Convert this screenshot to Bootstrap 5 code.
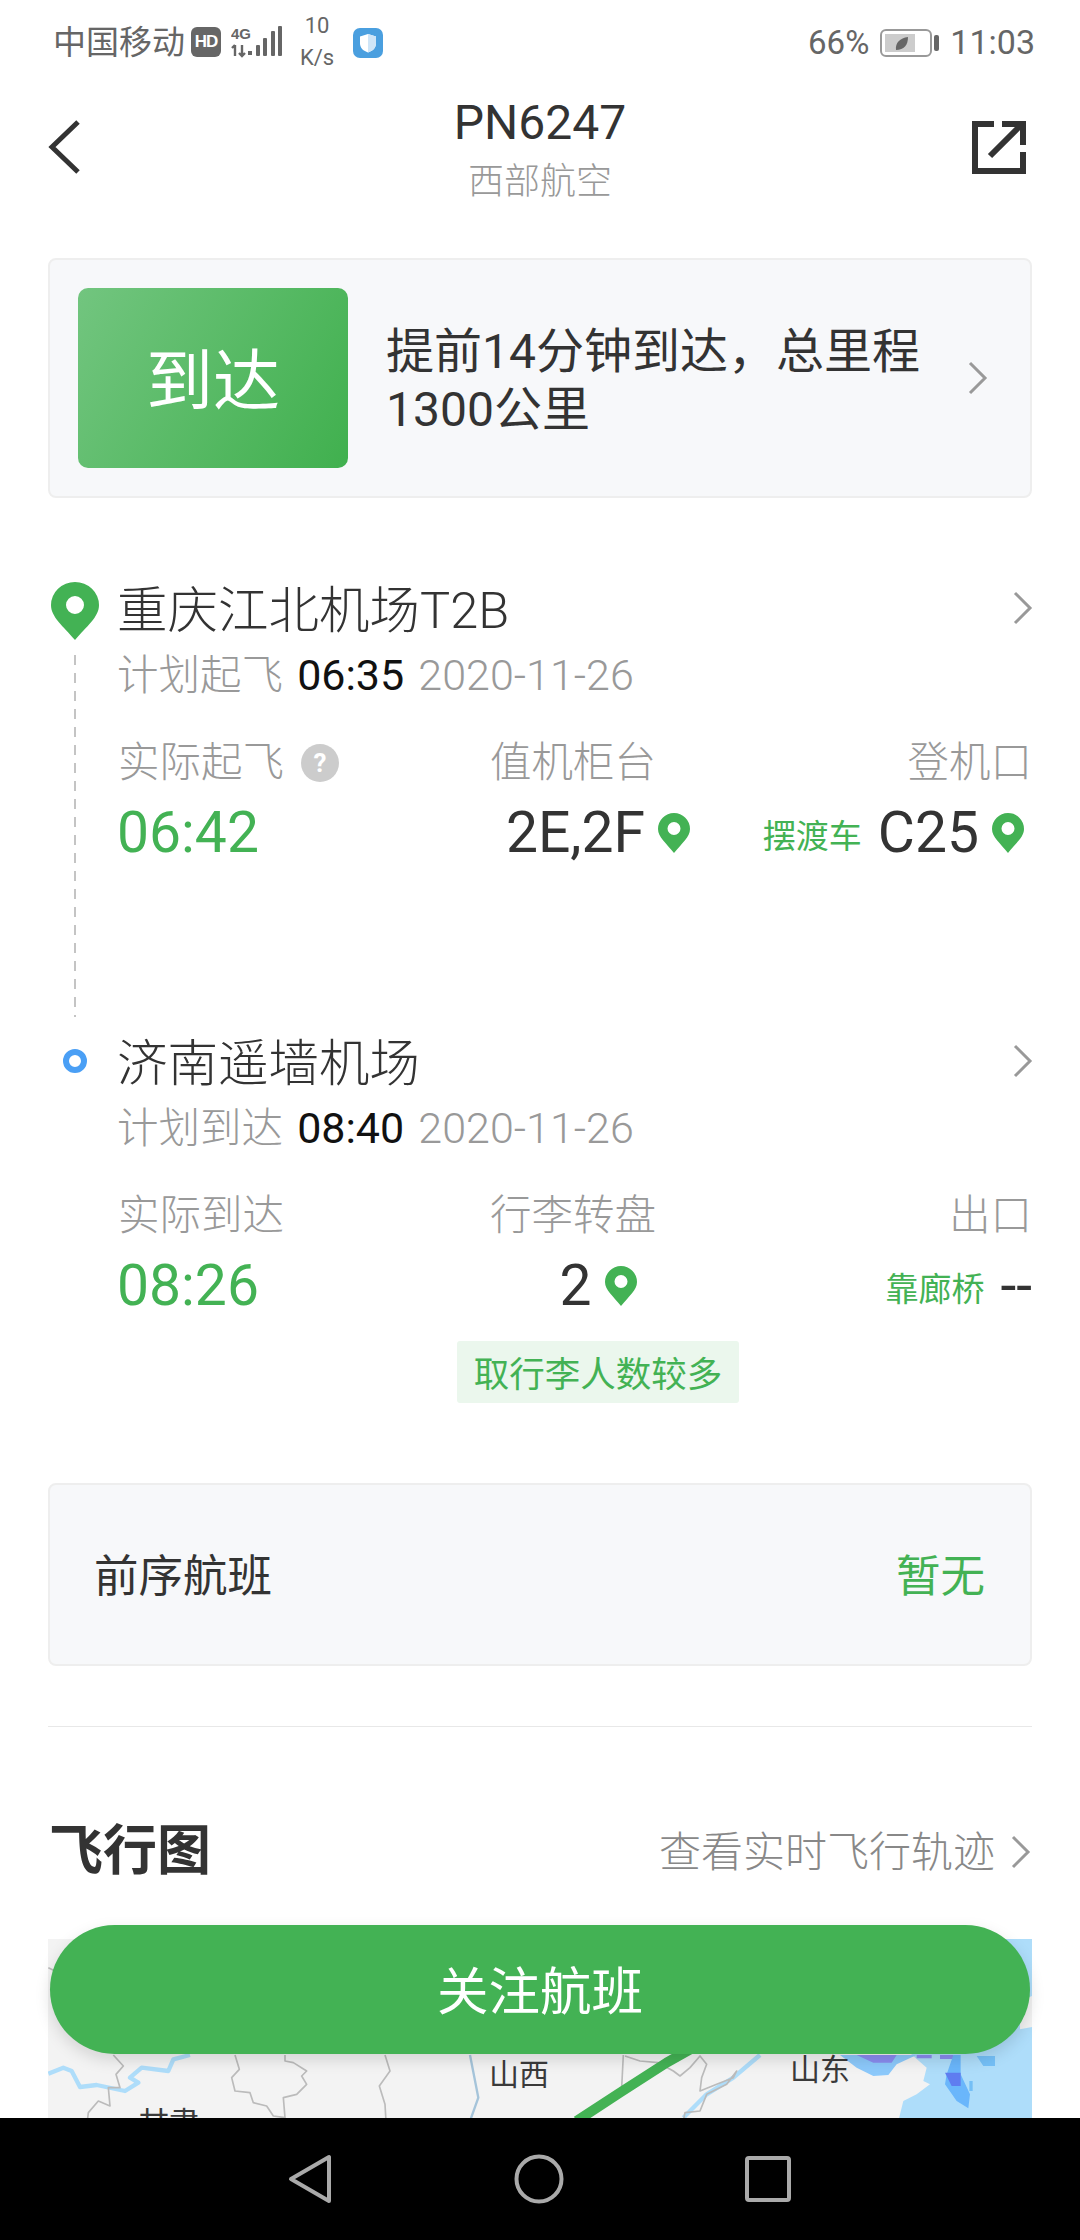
<!DOCTYPE html>
<html lang="zh">
<head>
<meta charset="utf-8">
<title>PN6247</title>
<link href="https://cdn.jsdelivr.net/npm/bootstrap@5.3.0/dist/css/bootstrap.min.css" rel="stylesheet">
<style>
html,body{margin:0;background:#fff}
body{font-family:Roboto,"Noto Sans CJK SC",sans-serif;color:#333;font-weight:300}
.shell{position:relative;width:1080px;height:2240px;overflow:hidden;background:#fff}
.statusbar{height:70px;padding:15px 45px 0 53px;color:#666;font-size:33px;line-height:55px;font-weight:400}
.statusbar svg{display:block}
.clock{font-size:34px}
.hd-badge{width:30px;height:30px;border-radius:6px;background:#666;color:#fff;font:700 17px/30px "Liberation Sans",sans-serif;text-align:center;letter-spacing:-1px;margin-left:6px;margin-top:-2px}
.net-icon{margin-left:10px}
.speed{width:46px;margin:-1px 13px 0 11px;font-size:22px;line-height:32px;text-align:center}
.batt-icon{margin:0 10px 0 11px}
.head-bar{height:188px;padding:0 54px 0 48px}
.head-side{width:60px;margin-top:50px}
.head-side-end{width:54px;margin-top:50px}
.head-mid{padding-top:23px;text-align:center}
.head-no{font-size:48px;line-height:60px;font-weight:400}
.head-air{font-size:36px;line-height:58px;color:#999}
.panel-soft{margin:0 48px;background:#f7f8fa;border:2px solid #eee;border-radius:8px}
.status-panel{height:240px;padding:28px 41px 28px 28px}
.status-box{width:270px;height:180px;padding-top:8px;border-radius:10px;background:linear-gradient(120deg,#72c57f,#40b04e);color:#fff;font-size:67px;font-weight:400}
.status-text{width:550px;margin-left:38px;padding-top:6px;font-size:48px;line-height:58px;font-weight:400}
.route{margin:80px 48px 0}
.rail{width:54px;margin-right:16px}
.rail-dash{flex:1;width:2px;margin:15px 0 14px;background:repeating-linear-gradient(#c4c4c4 0 10px,transparent 10px 18px)}
.stop-one{height:453px}
.stop-body{width:914px}
.stop-title{height:60px;font-size:50.5px;line-height:60px}
.stop-title span{padding-top:5px;margin-left:-1px}
.stop-title svg{margin-right:-2px}
.plan-row{margin-top:9px;font-size:41.5px;line-height:56px;color:#999;margin-left:-1px}
.plan-row b{font-weight:400;color:#111;font-size:43px;margin-left:4px}
.plan-date{font-size:43px;margin-left:4px}
.stat-row{margin-top:31px;font-size:41.5px;line-height:56px;color:#999}
.value-row{margin-top:7px;height:70px;font-size:57px;line-height:70px;font-weight:400;color:#333}
.cell-a{width:372px}
.cell-b{width:216px}
.cell-c{flex:1}
.cell-wide{margin-left:-40px}
.tone-green{color:#43b254}
.value-row .cell-a{text-indent:-1px}
.hint{display:inline-flex;width:38px;height:38px;border-radius:50%;background:#ccc;color:#fff;font-size:26px;font-weight:700;margin-left:17px}
.mode{font-size:33px;color:#43b254;margin-right:16px;line-height:70px;padding-top:8px;font-weight:400}
.pin-after{margin-left:13px}
.pin-end{margin:0 8px 0 13px}
.crowd{width:282px;height:62px;margin:20px 0 0 339px;padding-top:7px;background:#ebf7ed;border-radius:3px;color:#43b254;font-size:35.5px;font-weight:400}
.prev-panel{height:183px;margin-top:80px;padding:6px 45px 0 44px;font-size:44.5px;font-weight:400}
.rule-line{height:1px;margin:60px 48px 0;background:#e8e8e8}
.map-head{height:60px;margin:95px 48px 0}
.map-title{font-size:54px;font-weight:700;line-height:60px;margin-left:1px}
.map-link{font-size:42px;color:#888}
.link-chev{margin-left:15px}
.map-box{margin:57px 48px 0;height:180px;overflow:hidden;background:#f3f3f3}
.map-box svg{display:block}
.map-box text{font:400 30px "Noto Sans CJK SC",sans-serif;fill:#3a3a3a}
.follow{position:absolute;left:50px;top:1925px;width:980px;height:129px;padding:8px 0 2px;border:0;border-radius:65px;background:#43b254;color:#fff;font-size:51.5px;font-weight:400;box-shadow:0 6px 16px rgba(0,0,0,.13)}
.softbar{height:122px;background:#000;gap:181px;padding-right:4px}
.main-area{height:2118px;overflow:hidden}
.dest-dot{margin-top:18px}
</style>
</head>
<body>
<div class="shell">
  <div class="main-area">
    <div class="statusbar d-flex justify-content-between align-items-center">
      <div class="d-flex align-items-center">
        <span>中国移动</span>
        <span class="hd-badge">HD</span>
        <svg class="net-icon" width="52" height="34" viewBox="0 0 52 34">
          <text x="0" y="13" font-family="Liberation Sans" font-weight="700" font-size="15" fill="#666">4G</text>
          <path d="M4 19v11M1 22l3-3M11 19v11M8 27l3 3 3-3" stroke="#666" stroke-width="2.4" fill="none"/>
          <rect x="17" y="25" width="4" height="4" fill="#666"/><rect x="25" y="19" width="4" height="11" rx="1" fill="#666"/><rect x="32" y="12" width="4" height="18" rx="1" fill="#666"/><rect x="40" y="5" width="4" height="25" rx="1" fill="#666"/><rect x="47" y="0" width="4" height="30" rx="1" fill="#666"/>
        </svg>
        <div class="speed">10<br>K/s</div>
        <svg width="30" height="30" viewBox="0 0 30 30"><rect width="30" height="30" rx="7" fill="#4a9fdf"/><path d="M15 6l8 2.500v7c0 4.500-3.500 7.500-8 9-4.500-1.500-8-4.500-8-9v-7z" fill="#fff"/><path d="M15 6l8 2.500v7c0 4.500-3.500 7.500-8 9z" fill="#cfe5f7"/></svg>
      </div>
      <div class="d-flex align-items-center">
        <span>66%</span>
        <svg class="batt-icon" width="60" height="28" viewBox="0 0 60 28"><rect x="1" y="1" width="50" height="26" rx="5" fill="#fff" stroke="#999" stroke-width="2"/><rect x="5" y="5" width="30" height="18" fill="#ccc"/><path d="M16 21c-1-7 4-12 12-13 0 8-4 13-12 13z" fill="#666"/><rect x="54" y="6" width="5" height="16" rx="2" fill="#666"/></svg>
        <span class="clock">11:03</span>
      </div>
    </div>
    <div class="head-bar d-flex justify-content-between align-items-start">
      <div class="head-side"><svg class="d-block" width="33" height="54" viewBox="0 0 33 54"><path d="M30 2L4 27l26 25" fill="none" stroke="#333" stroke-width="5"/></svg></div>
      <div class="head-mid"><div class="head-no">PN6247</div><div class="head-air">西部航空</div></div>
      <div class="head-side-end"><svg class="d-block" width="54" height="54" viewBox="0 0 54 54"><path d="M22 4H3v47h48V32M18 36L48 6M30 4h21v21" fill="none" stroke="#333" stroke-width="6"/></svg></div>
    </div>
    <div class="panel-soft status-panel d-flex align-items-center">
      <div class="status-box d-flex align-items-center justify-content-center">到达</div>
      <div class="status-text">提前14分钟到达，总里程<br>1300公里</div>
      <svg class="ms-auto" width="22" height="34" viewBox="0 0 22 34"><path d="M3 2l15 15L3 32" fill="none" stroke="#999" stroke-width="3"/></svg>
    </div>
    <div class="route">
      <div class="d-flex stop-one">
        <div class="rail d-flex flex-column align-items-center">
          <svg class="mt-1 flex-shrink-0" width="48" height="58" viewBox="0 0 48 58"><path fill-rule="evenodd" d="M24 58C12 44 0 35 0 23a24 23 0 0 1 48 0c0 12-12 21-24 35zM24 14a9 9 0 1 0 0 18 9 9 0 0 0 0-18z" fill="#43b254"/></svg>
          <div class="rail-dash"></div>
        </div>
        <div class="stop-body">
          <div class="stop-title d-flex justify-content-between align-items-center"><span>重庆江北机场T2B</span><svg width="22" height="34" viewBox="0 0 22 34"><path d="M3 2l15 15L3 32" fill="none" stroke="#999" stroke-width="3"/></svg></div>
          <div class="plan-row">计划起飞 <b>06:35</b> <span class="plan-date">2020-11-26</span></div>
          <div class="stat-row d-flex"><div class="cell-a d-flex align-items-center">实际起飞<span class="hint align-items-center justify-content-center">?</span></div><div class="cell-b">值机柜台</div><div class="cell-c text-end">登机口</div></div>
          <div class="value-row d-flex">
            <div class="cell-a tone-green">06:42</div>
            <div class="cell-b d-flex justify-content-center align-items-center">2E,2F<svg class="pin-after" width="32" height="40" viewBox="0 0 32 40"><path fill-rule="evenodd" d="M16 40C8 30 0 24 0 16a16 16 0 0 1 32 0c0 8-8 14-16 24zM16 9a6.500 6.500 0 1 0 0 13 6.500 6.500 0 0 0 0-13z" fill="#43b254"/></svg></div>
            <div class="cell-c cell-wide d-flex justify-content-end align-items-center"><span class="mode">摆渡车</span>C25<svg class="pin-end" width="32" height="40" viewBox="0 0 32 40"><path fill-rule="evenodd" d="M16 40C8 30 0 24 0 16a16 16 0 0 1 32 0c0 8-8 14-16 24zM16 9a6.500 6.500 0 1 0 0 13 6.500 6.500 0 0 0 0-13z" fill="#43b254"/></svg></div>
          </div>
        </div>
      </div>
      <div class="d-flex">
        <div class="rail d-flex flex-column align-items-center"><svg class="flex-shrink-0 dest-dot" width="24" height="24" viewBox="0 0 24 24"><circle cx="12" cy="12" r="9" fill="#fff" stroke="#4a9ff5" stroke-width="6"/></svg></div>
        <div class="stop-body">
          <div class="stop-title d-flex justify-content-between align-items-center"><span>济南遥墙机场</span><svg width="22" height="34" viewBox="0 0 22 34"><path d="M3 2l15 15L3 32" fill="none" stroke="#999" stroke-width="3"/></svg></div>
          <div class="plan-row">计划到达 <b>08:40</b> <span class="plan-date">2020-11-26</span></div>
          <div class="stat-row d-flex"><div class="cell-a">实际到达</div><div class="cell-b">行李转盘</div><div class="cell-c text-end">出口</div></div>
          <div class="value-row d-flex">
            <div class="cell-a tone-green">08:26</div>
            <div class="cell-b d-flex justify-content-center align-items-center">2<svg class="pin-after" width="32" height="40" viewBox="0 0 32 40"><path fill-rule="evenodd" d="M16 40C8 30 0 24 0 16a16 16 0 0 1 32 0c0 8-8 14-16 24zM16 9a6.500 6.500 0 1 0 0 13 6.500 6.500 0 0 0 0-13z" fill="#43b254"/></svg></div>
            <div class="cell-c d-flex justify-content-end align-items-center"><span class="mode">靠廊桥</span>--</div>
          </div>
          <div class="crowd d-flex align-items-center justify-content-center">取行李人数较多</div>
        </div>
      </div>
    </div>
    <div class="panel-soft prev-panel d-flex justify-content-between align-items-center"><span>前序航班</span><span class="tone-green">暂无</span></div>
    <div class="rule-line"></div>
    <div class="map-head d-flex justify-content-between align-items-center">
      <span class="map-title">飞行图</span>
      <span class="d-flex align-items-center"><span class="map-link">查看实时飞行轨迹</span><svg class="link-chev" width="22" height="34" viewBox="0 0 22 34"><path d="M3 2l15 15L3 32" fill="none" stroke="#999" stroke-width="3"/></svg></span>
    </div>
    <div class="map-box">
      <svg width="984" height="180" viewBox="0 0 984 180">
        <g transform="translate(-18,-18) scale(.33333)" fill="none" stroke-linejoin="round">
          <path d="M55 458L100 440 125 450 150 498 200 492 285 510 325 485 300 470 335 440 415 450 430 415 480 402" stroke="#aeddfa" stroke-width="13"/>
          <path d="M250 402L280 435 258 460 270 500 235 500 240 555 205 540 175 575 172 600M55 140L75 150M615 402L628 445 605 470 615 510 660 515 670 545 710 555 730 585 765 590 760 530 800 520 830 490 815 465 830 450 790 425 765 420 765 402M1065 402L1080 450 1048 495 1065 550 1068 600" stroke="#bbb" stroke-width="5"/>
          <path d="M1320 402L1345 530 1320 600" stroke="#a5c4da" stroke-width="7"/>
        </g>
        <g transform="translate(492,-18) scale(.33333)" stroke-linejoin="round">
          <path d="M1300 54H1476V600H1075L1090 540 1130 520 1170 490 1150 480 1160 440 1000 300z" fill="#aeddfa"/>
          <path d="M1440 240L1476 225V318L1440 325z" fill="#f3f3f3"/>
          <path d="M900 402L950 440 1000 465 1045 462 1070 430 1130 402z" fill="#8cc9fb"/>
          <path d="M950 402H1070L1055 425H1000zM1130 402H1175V412H1130zM1200 402H1240V414H1200z" fill="#8a8cf0"/>
          <path d="M1240 402H1262V460L1290 520 1285 562 1250 540 1215 490 1220 460z" fill="#6ab6fb"/>
          <path d="M1215 455H1262V495H1235z" fill="#5f7df0"/>
          <path d="M1310 405H1365V435H1330zM1288 480H1298V510H1288z" fill="#74bff6"/>
          <path d="M430 590L500 520 580 470 660 402" fill="none" stroke="#aeddfa" stroke-width="13"/>
          <path d="M250 402L245 500M255 405L300 420 355 425 400 450 420 465 450 440 480 405 500 430 485 470 480 510 530 490 580 470 590 450 560 490 500 520 480 570 435 575 430 600" fill="none" stroke="#bbb" stroke-width="5"/>
          <path d="M110 600L240 515 380 425 460 380" fill="none" stroke="#43b254" stroke-width="30"/>
        </g>
        <text x="441" y="146">山西</text>
        <text x="742" y="141">山东</text>
        <text x="91" y="194">甘肃</text>
      </svg>
    </div>
  </div>
  <div class="softbar d-flex justify-content-center align-items-center">
    <svg width="48" height="50" viewBox="0 0 48 50"><path d="M44 3v44L6 25z" fill="none" stroke="#aaa" stroke-width="4" stroke-linejoin="round"/></svg>
    <svg width="50" height="50" viewBox="0 0 50 50"><circle cx="25" cy="25" r="22.500" fill="none" stroke="#aaa" stroke-width="4"/></svg>
    <svg width="46" height="46" viewBox="0 0 46 46"><rect x="2" y="2" width="42" height="42" rx="2" fill="none" stroke="#aaa" stroke-width="4"/></svg>
  </div>
  <button type="button" class="btn follow">关注航班</button>
</div>
<script src="https://cdn.jsdelivr.net/npm/bootstrap@5.3.0/dist/js/bootstrap.bundle.min.js"></script>
</body>
</html>
